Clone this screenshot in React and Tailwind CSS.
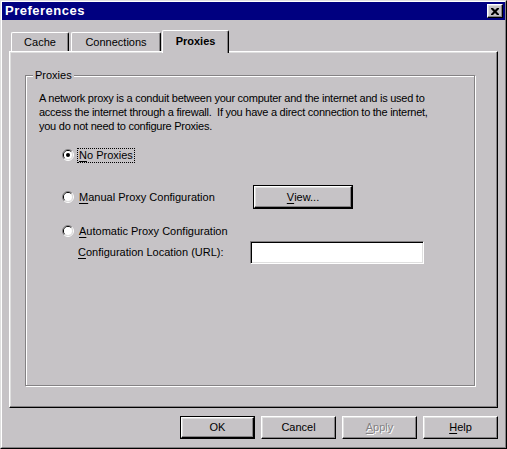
import React from 'react'

const raised =
  'bg-[#c6c3c6] border border-t-white border-l-white border-r-black border-b-black shadow-[inset_-1px_-1px_0_#848284,inset_1px_1px_0_#dfdfdf]'

function Radio({ checked }) {
  return (
    <svg width="12" height="12" viewBox="0 0 12 12" className="shrink-0">
      <path d="M2.1 9.9 A5.5 5.5 0 0 1 9.9 2.1" fill="none" stroke="#848284" strokeWidth="1" />
      <path d="M9.9 2.1 A5.5 5.5 0 0 1 2.1 9.9" fill="none" stroke="#ffffff" strokeWidth="1" />
      <path d="M2.8 9.2 A4.5 4.5 0 0 1 9.2 2.8" fill="none" stroke="#000000" strokeWidth="1" />
      <path d="M9.2 2.8 A4.5 4.5 0 0 1 2.8 9.2" fill="none" stroke="#dfdfdf" strokeWidth="1" />
      <circle cx="6" cy="6" r="4" fill="#ffffff" />
      {checked && <circle cx="6" cy="6" r="2" fill="#000000" />}
    </svg>
  )
}

function Button({ children, isDefault, className = '' }) {
  if (isDefault) {
    return (
      <div className={`flex border border-black ${className}`}>
        <div className={`flex-1 flex items-center justify-center ${raised}`}>{children}</div>
      </div>
    )
  }
  return <div className={`flex items-center justify-center ${raised} ${className}`}>{children}</div>
}

const U = ({ children }) => <span className="underline underline-offset-[2px]">{children}</span>

export default function App() {
  return (
    <div className="w-[507px] h-[449px] bg-[#c6c3c6] text-[11px] text-black font-['Liberation_Sans',Arial,sans-serif] border border-t-[#dfdfdf] border-l-[#dfdfdf] border-r-black border-b-black">
      <div className="h-full flex flex-col border border-t-white border-l-white border-r-[#848284] border-b-[#848284]">
        {/* title bar */}
        <div className="h-[18px] bg-[#000080] flex items-center justify-between pl-[3px] pr-[2px]">
          <span className="text-white font-bold text-[13px] tracking-[0.5px]">Preferences</span>
          <div className={`w-[16px] h-[14px] flex items-center justify-center ${raised}`}>
            <svg width="8" height="7" viewBox="0 0 8 7">
              <path d="M0 0h2l2 2 2-2h2v1l-2.5 2.5L8 6v1H6L4 5 2 7H0V6l2.5-2.5L0 1z" fill="#000" />
            </svg>
          </div>
        </div>

        <div className="flex-1 flex flex-col px-[7px] pt-[10px]">
          {/* tabs */}
          <div className="h-[21px] flex items-end pl-[2px]">
            <div className="w-[58px] h-[19px] flex items-center justify-center rounded-t-[2px] border-t border-l border-r border-t-white border-l-white border-r-black shadow-[inset_-1px_0_0_#848284]">
              Cache
            </div>
            <div className="ml-[2px] w-[90px] h-[19px] flex items-center justify-center rounded-t-[2px] border-t border-l border-r border-t-white border-l-white border-r-black shadow-[inset_-1px_0_0_#848284]">
              Connections
            </div>
            <div className="relative z-10 ml-[1px] -mb-[2px] w-[67px] h-[23px] pb-[2px] flex items-center justify-center bg-[#c6c3c6] font-bold rounded-t-[2px] border-t border-l border-r border-t-white border-l-white border-r-black shadow-[inset_-1px_0_0_#848284]">
              Proxies
            </div>
          </div>

          {/* tab panel */}
          <div className="h-[357px] border border-t-white border-l-white border-r-black border-b-black shadow-[inset_-1px_-1px_0_#848284,inset_1px_1px_0_#dfdfdf]">
            <div className="relative ml-[15px] mt-[23px] w-[450px] h-[311px] border border-[#848284] shadow-[inset_1px_1px_0_#fff,1px_1px_0_#fff] pl-[13px] pt-[15px]">
              <span className="absolute -top-[8px] left-[7px] px-[2px] bg-[#c6c3c6] leading-[14px]">Proxies</span>

              <p className="leading-[14px] tracking-[-0.25px] whitespace-nowrap">
                A network proxy is a conduit between your computer and the internet and is used to
                <br />
                access the internet through a firewall.&nbsp; If you have a direct connection to the internet,
                <br />
                you do not need to configure Proxies.
              </p>

              <div className="mt-[12px] ml-[23px] h-[20px] flex items-center">
                <Radio checked />
                <span className="ml-[4px] px-[1px] leading-[13px] outline outline-1 outline-dotted outline-black">
                  <U>N</U>o Proxies
                </span>
              </div>

              <div className="mt-[20px] ml-[23px] h-[24px] flex items-center">
                <div className="w-[191px] flex items-center">
                  <Radio />
                  <span className="ml-[5px]">
                    <U>M</U>anual Proxy Configuration
                  </span>
                </div>
                <Button isDefault className="w-[100px] h-[24px]">
                  <U>V</U>iew...
                </Button>
              </div>

              <div className="mt-[12px] ml-[23px] h-[20px] flex items-center">
                <Radio />
                <span className="ml-[5px]">
                  <U>A</U>utomatic Proxy Configuration
                </span>
              </div>

              <div className="ml-[39px] h-[23px] flex items-center">
                <span className="w-[172px]">
                  <U>C</U>onfiguration Location (URL):
                </span>
                <div className="w-[174px] h-[23px] bg-white border border-t-[#848284] border-l-[#848284] border-r-white border-b-white shadow-[inset_1px_1px_0_#000,inset_-1px_-1px_0_#dfdfdf]" />
              </div>
            </div>
          </div>

          {/* dialog buttons */}
          <div className="mt-[8px] flex justify-end gap-[6px]">
            <Button isDefault className="w-[75px] h-[23px]">OK</Button>
            <Button className="w-[75px] h-[23px]">Cancel</Button>
            <Button className="w-[75px] h-[23px]">
              <span className="text-[#848284] [text-shadow:1px_1px_0_#fff]">
                <U>A</U>pply
              </span>
            </Button>
            <Button className="w-[75px] h-[23px]">
              <U>H</U>elp
            </Button>
          </div>
        </div>
      </div>
    </div>
  )
}
